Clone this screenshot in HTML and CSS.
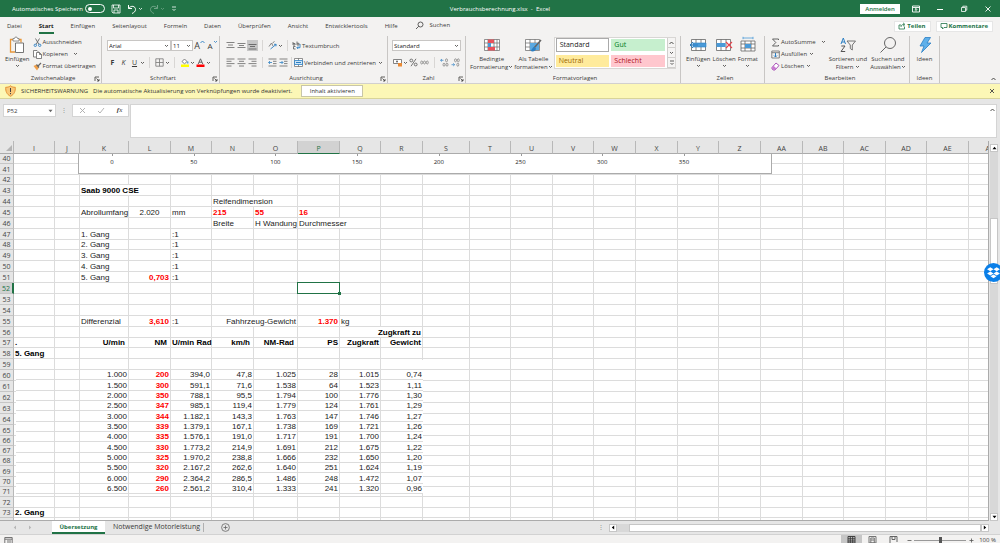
FILE: index.html
```html
<!DOCTYPE html>
<html lang="de">
<head>
<meta charset="utf-8">
<title>Verbrauchsberechnung.xlsx - Excel</title>
<link rel="stylesheet" href="styles.css">
</head>
<body>
<svg class="defs" aria-hidden="true">
  <symbol id="chev" viewBox="0 0 5 4"><path d="M1 1l1.500 1.500L4 1" fill="none" stroke="currentColor" stroke-width=".8"/></symbol>
  <symbol id="chev-up" viewBox="0 0 5 4"><path d="M.5 3l2-2 2 2" fill="none" stroke="currentColor" stroke-width=".9"/></symbol>
  <symbol id="launch" viewBox="0 0 6 6"><path d="M1 5V1h4M2.500 2.500L5 5M5 3v2H3" fill="none" stroke="currentColor" stroke-width=".8"/></symbol>
</svg>

<header class="titlebar">
  <div class="quick">
    <span>Automatisches Speichern</span>
    <button class="toggle" aria-label="Automatisches Speichern"><i></i></button>
    <button aria-label="Speichern"><svg width="10" height="10" viewBox="0 0 10 10" fill="none" stroke="currentColor" stroke-width=".8"><path d="M1 1h8v8H2L1 8zM2.500 1v3h5V1M3 9V6h4v3"/></svg></button>
    <button aria-label="Rückgängig"><svg width="10" height="10" viewBox="0 0 10 10" fill="none" stroke="currentColor"><path d="M1.500 1v3.500H5M1.500 4.500C4 1 8.500 2 8.500 5.500 8.500 7.500 7 8.500 5 9.500"/></svg><svg class="chev"><use href="#chev"/></svg></button>
    <button class="dim" aria-label="Wiederholen"><svg width="10" height="10" viewBox="0 0 10 10" fill="none" stroke="currentColor"><path d="M8.500 1v3.500H5M8.500 4.500C6 1 1.500 2 1.500 5.500 1.500 7.500 3 8.500 5 9.500"/></svg><svg class="chev"><use href="#chev"/></svg></button>
    <button aria-label="Symbolleiste anpassen"><svg width="6" height="6" viewBox="0 0 6 6" fill="none" stroke="currentColor" stroke-width=".8"><path d="M1 1h4M1.500 3L3 4.500 4.500 3"/></svg></button>
  </div>
  <h1>Verbrauchsberechnung.xlsx&nbsp; -&nbsp; Excel</h1>
  <div class="window">
    <button class="signin">Anmelden</button>
    <button aria-label="Menüband-Anzeigeoptionen"><svg width="10" height="8" viewBox="0 0 10 8" fill="none" stroke="currentColor" stroke-width=".9"><path d="M1.500 1h7v6h-7zM1.500 2.500h7M5 6.500V3.500M3.800 4.700L5 3.500l1.200 1.200"/></svg></button>
    <button aria-label="Minimieren"><svg width="10" height="8" viewBox="0 0 10 8" stroke="currentColor"><path d="M2 4.500h6"/></svg></button>
    <button aria-label="Verkleinern"><svg width="10" height="8" viewBox="0 0 10 8" fill="none" stroke="currentColor" stroke-width=".8"><path d="M2.500 2.500h4v4h-4zM3.800 2.500V1.200h4v4H6.500"/></svg></button>
    <button aria-label="Schließen"><svg width="10" height="8" viewBox="0 0 10 8" stroke="currentColor" stroke-width=".9"><path d="M2.500 1.500l5 5M7.500 1.500l-5 5"/></svg></button>
  </div>
</header>

<nav class="tabs">
  <a href="#">Datei</a><a href="#" class="active">Start</a><a href="#">Einfügen</a><a href="#">Seitenlayout</a><a href="#">Formeln</a><a href="#">Daten</a><a href="#">Überprüfen</a><a href="#">Ansicht</a><a href="#">Entwicklertools</a><a href="#">Hilfe</a>
  <a href="#" class="search"><svg width="9" height="9" viewBox="0 0 9 9" fill="none" stroke="currentColor" stroke-width=".8"><circle cx="5.500" cy="3.500" r="2.500"/><path d="M3.700 5.300L1 8"/></svg>Suchen</a>
  <div class="share">
    <button><svg width="8" height="8" viewBox="0 0 8 8" fill="none" stroke="currentColor" stroke-width=".8"><path d="M3 3H1v4h5.500V4.500M3 5c0-2 1-2.500 3-2.500M5 .8l2 1.700-2 1.700"/></svg>Teilen</button>
    <button><svg width="8" height="8" viewBox="0 0 8 8" fill="none" stroke="currentColor" stroke-width=".8"><path d="M1 1.500h6v4H4L2.500 7V5.500H1z"/></svg>Kommentare</button>
  </div>
</nav>

<section class="ribbon">
  <div class="group g-clip">
    <div class="body">
      <button class="big"><svg width="18" height="18" viewBox="0 0 18 18" fill="none"><path d="M5 3.500H2.500v12.500H7" stroke="#e8973a" stroke-width="1.300"/><path d="M10 3.500h3v3" stroke="#e8973a" stroke-width="1.300"/><path d="M5 5V2.500h1.500a1.500 1.500 0 0 1 3 0H11V5z" fill="#fff" stroke="#777" stroke-width=".8"/><path d="M7.500 7h8v9.500h-8z" fill="#fff" stroke="#666" stroke-width=".9"/></svg><span>Einfügen</span><svg class="chev"><use href="#chev"/></svg></button>
      <div class="list">
        <button><svg width="9" height="9" viewBox="0 0 9 9" fill="none"><path d="M2.500.5l3.500 6M6.500.5L3 6.500" stroke="#666" stroke-width=".9"/><circle cx="2.300" cy="7.300" r="1.200" stroke="#2b7fc4" stroke-width=".9"/><circle cx="6.700" cy="7.300" r="1.200" stroke="#2b7fc4" stroke-width=".9"/></svg>Ausschneiden</button>
        <button><svg width="9" height="9" viewBox="0 0 9 9" fill="#fff" stroke="#666" stroke-width=".8"><path d="M3 7H.5V.5H4L5 1.500V3"/><path d="M3.500 2.500h3l2 2v4h-5zM6.500 2.500v2h2"/></svg>Kopieren <svg class="chev"><use href="#chev"/></svg></button>
        <button><svg width="9" height="9" viewBox="0 0 9 9"><path d="M.5 4l3-1.500L6 5.500 4 8.500z" fill="#f0a04b"/><path d="M3.500 2.500L6 5.500M5 4l3-3" stroke="#666" stroke-width="1.200"/></svg>Format übertragen</button>
      </div>
    </div>
    <h2>Zwischenablage<svg class="launch"><use href="#launch"/></svg></h2>
  </div>

  <div class="group g-font">
    <div class="body stack">
      <div class="row">
        <span class="pick font"><select aria-label="Schriftart"><option>Arial</option></select><svg class="chev"><use href="#chev"/></svg></span><span class="pick size"><select aria-label="Schriftgrad"><option>11</option></select><svg class="chev"><use href="#chev"/></svg></span>
        <button class="tool glyph" aria-label="Schriftgrad vergrößern">A<svg class="chev blue"><use href="#chev-up"/></svg></button>
        <button class="tool glyph small" aria-label="Schriftgrad verkleinern">A<svg class="chev blue"><use href="#chev"/></svg></button>
      </div>
      <div class="row">
        <button class="tool"><b>F</b></button><button class="tool"><i>K</i></button><button class="tool"><u>U</u></button><svg class="chev"><use href="#chev"/></svg><hr>
        <button class="tool" aria-label="Rahmen"><svg width="9" height="9" viewBox="0 0 9 9" fill="none" stroke="#777" stroke-width=".8"><path d="M.8.8h7.400v7.400H.8zM4.500.8v7.400M.8 4.500h7.400"/></svg></button><svg class="chev"><use href="#chev"/></svg><hr>
        <button class="tool" aria-label="Füllfarbe"><svg width="10" height="9" viewBox="0 0 10 9"><path d="M2 3.500l2.500-2.500 2.500 2.500-2.500 2.300z" fill="#fff" stroke="#666" stroke-width=".8"/><path d="M7.800 3.500v2" stroke="#2b7fc4"/><path d="M1 6.500h8V9H1z" fill="#ff0"/></svg></button><svg class="chev"><use href="#chev"/></svg>
        <button class="tool" aria-label="Schriftfarbe"><svg width="9" height="9" viewBox="0 0 9 9"><path d="M2.200 6l2.300-5.200L6.800 6M3 4.200h3" fill="none" stroke="#555" stroke-width=".9"/><path d="M.5 6.500h8V9h-8z" fill="#f00"/></svg></button><svg class="chev"><use href="#chev"/></svg>
      </div>
    </div>
    <h2>Schriftart<svg class="launch"><use href="#launch"/></svg></h2>
  </div>

  <div class="group g-align">
    <div class="body stack">
      <div class="row">
        <button class="tool" aria-label="Oben"><svg width="9" height="9" viewBox="0 0 9 9" stroke="#666" stroke-width=".8"><path d="M.5 1.500h8M2 4h5M.5 6.500h8"/></svg></button>
        <button class="tool" aria-label="Mitte"><svg width="9" height="9" viewBox="0 0 9 9" stroke="#666" stroke-width=".8"><path d="M.5 2.500h8M2 4.500h5M.5 6.500h8"/></svg></button>
        <button class="tool on" aria-label="Unten"><svg width="9" height="9" viewBox="0 0 9 9" stroke="#555" stroke-width=".8"><path d="M.5 3.500h8M2 5.500h5M.5 8h8"/></svg></button><hr>
        <button class="tool" aria-label="Ausrichtung"><svg width="9" height="9" viewBox="0 0 9 9" fill="none"><path d="M1 5.500l2.500-3.500 1.500 3M4.500 2l2-1.500" stroke="#777" stroke-width=".9"/><path d="M2.500 8L8 3.500M6 3.300l2.200 0-.3 2" stroke="#2b7fc4" stroke-width=".9"/></svg></button><svg class="chev"><use href="#chev"/></svg><hr>
        <button class="text"><svg width="9" height="9" viewBox="0 0 9 9" fill="none" stroke-width=".9"><path d="M1 1v3h2V2.500H1M5 .5V4h2V2.300H5M3.500 5.500H1.500v2.500h2" stroke="#666"/><path d="M8 3v3.700H5M6.200 5.400L4.900 6.700l1.300 1.300" stroke="#2b7fc4"/></svg>Textumbruch</button>
      </div>
      <div class="row">
        <button class="tool" aria-label="Linksbündig"><svg width="9" height="9" viewBox="0 0 9 9" stroke="#666" stroke-width=".8"><path d="M.5 1h8M.5 3.300h5M.5 5.600h8M.5 8h5"/></svg></button>
        <button class="tool" aria-label="Zentriert"><svg width="9" height="9" viewBox="0 0 9 9" stroke="#666" stroke-width=".8"><path d="M.5 1h8M2 3.300h5M.5 5.600h8M2 8h5"/></svg></button>
        <button class="tool" aria-label="Rechtsbündig"><svg width="9" height="9" viewBox="0 0 9 9" stroke="#666" stroke-width=".8"><path d="M.5 1h8M3.500 3.300h5M.5 5.600h8M3.500 8h5"/></svg></button><hr>
        <button class="tool" aria-label="Einzug verkleinern"><svg width="9" height="9" viewBox="0 0 9 9" fill="none" stroke="#666" stroke-width=".8"><path d="M.5 1h8M5 3.300h3.500M5 5.600h3.500M.5 8h8"/><path d="M4 4.500H.7M2 3L.6 4.500 2 6" stroke="#2b7fc4"/></svg></button>
        <button class="tool" aria-label="Einzug vergrößern"><svg width="9" height="9" viewBox="0 0 9 9" fill="none" stroke="#666" stroke-width=".8"><path d="M.5 1h8M5 3.300h3.500M5 5.600h3.500M.5 8h8"/><path d="M.5 4.500h3.400M2.500 3L4 4.500 2.500 6" stroke="#2b7fc4"/></svg></button><hr class="tight">
        <button class="text"><svg width="9" height="9" viewBox="0 0 9 9"><path d="M.5.5h8v8h-8zM4.500.5v8" fill="#fff" stroke="#666" stroke-width=".7"/><path d="M.5 2.500h8v4h-8z" fill="#cfe6f7" stroke="#2b7fc4" stroke-width=".8"/><path d="M2 4.500h5" stroke="#2b7fc4"/></svg>Verbinden und zentrieren <svg class="chev"><use href="#chev"/></svg></button>
      </div>
    </div>
    <h2>Ausrichtung<svg class="launch"><use href="#launch"/></svg></h2>
  </div>

  <div class="group g-num">
    <div class="body stack">
      <div class="row"><span class="pick"><select aria-label="Zahlenformat"><option>Standard</option></select><svg class="chev"><use href="#chev"/></svg></span></div>
      <div class="row">
        <button class="tool" aria-label="Währung"><svg width="10" height="9" viewBox="0 0 10 9"><path d="M.5 1.500h8v4h-8z" fill="#fff" stroke="#666" stroke-width=".8"/><circle cx="4" cy="3.500" r="1" fill="#666"/><path d="M5 5h4v3.500H5z" fill="#e98a35"/></svg></button><svg class="chev"><use href="#chev"/></svg>
        <button class="tool" aria-label="Prozent"><svg width="9" height="9" viewBox="0 0 9 9" fill="none" stroke="#555" stroke-width=".8"><circle cx="2.300" cy="2.500" r="1.400"/><circle cx="6.700" cy="6.500" r="1.400"/><path d="M7 .8L2 8.200"/></svg></button>
        <button class="tool" aria-label="Tausendertrennzeichen"><svg width="9" height="9" viewBox="0 0 9 9" fill="none" stroke="#777" stroke-width=".7"><ellipse cx="1.700" cy="4.500" rx="1" ry="1.500"/><ellipse cx="4.500" cy="4.500" rx="1" ry="1.500"/><ellipse cx="7.300" cy="4.500" rx="1" ry="1.500"/></svg></button><hr>
        <button class="tool" aria-label="Dezimalstelle hinzufügen"><svg width="9" height="9" viewBox="0 0 9 9" fill="none" stroke="#777" stroke-width=".7"><path d="M3.500 2.300H.6M2 1L.6 2.300 2 3.600" stroke="#2b7fc4"/><ellipse cx="6.500" cy="2.300" rx="1" ry="1.500"/><ellipse cx="4" cy="6.700" rx="1" ry="1.500"/><ellipse cx="7" cy="6.700" rx="1" ry="1.500"/></svg></button>
        <button class="tool" aria-label="Dezimalstelle löschen"><svg width="9" height="9" viewBox="0 0 9 9" fill="none" stroke="#777" stroke-width=".7"><path d="M.5 6.700h3M2.200 5.300l1.400 1.400L2.200 8" stroke="#2b7fc4"/><ellipse cx="4.500" cy="2.300" rx="1" ry="1.500"/><ellipse cx="7.300" cy="2.300" rx="1" ry="1.500"/><ellipse cx="6.800" cy="6.700" rx="1" ry="1.500"/></svg></button>
      </div>
    </div>
    <h2>Zahl<svg class="launch"><use href="#launch"/></svg></h2>
  </div>

  <div class="group g-styles">
    <div class="body">
      <button class="big"><svg width="18" height="18" viewBox="0 0 18 18"><path d="M1.500 3.500h15v11h-15zM1.500 7h15M1.500 11h15M5 3.500v11M11 3.500v11M14 3.500v11" fill="#fff" stroke="#666" stroke-width=".7"/><path d="M5 3.500h6V7H5zM5 11h7v3.500H5z" fill="#e8515a"/><path d="M5 7h3v4H5z" fill="#4a9ad8"/></svg><span>Bedingte<br>Formatierung<svg class="chev"><use href="#chev"/></svg></span></button>
      <button class="big"><svg width="18" height="18" viewBox="0 0 18 18"><path d="M1.500 3.500h14v11h-14zM1.500 7h14M1.500 11h14M6 3.500v11M11 3.500v11" fill="#fff" stroke="#666" stroke-width=".7"/><path d="M6 7h9v7H6z" fill="#5aa8e0"/><path d="M17 4l-7 8" stroke="#666" stroke-width="1.500"/><path d="M10.500 11c-2 0-2 2-4 4 3 1 5 0 5.500-2.500z" fill="#2b7fc4"/></svg><span>Als Tabelle<br>formatieren<svg class="chev"><use href="#chev"/></svg></span></button>
      <div class="gallery">
        <button class="st-std">Standard</button><button class="st-gut">Gut</button>
        <button class="st-neu">Neutral</button><button class="st-bad">Schlecht</button>
        <div class="pager"><button aria-label="Nach oben"><svg class="chev"><use href="#chev-up"/></svg></button><button aria-label="Nach unten"><svg class="chev"><use href="#chev"/></svg></button><button aria-label="Mehr"><svg width="6" height="6" viewBox="0 0 6 6" fill="none" stroke="currentColor" stroke-width=".8"><path d="M1 1h4M1.500 3L3 4.500 4.500 3"/></svg></button></div>
      </div>
    </div>
    <h2>Formatvorlagen</h2>
  </div>

  <div class="group g-cells">
    <div class="body">
      <button class="big"><svg width="18" height="18" viewBox="0 0 18 18"><path d="M2.500 3.500h14v11h-14zM7 3.500v11M12 3.500v11" fill="#fff" stroke="#666" stroke-width=".8"/><path d="M4 7h13v4H4z" fill="#4a9ad8" stroke="#2b7fc4" stroke-width=".6"/><path d="M9 9H1M4 6L1 9l3 3" fill="none" stroke="#2b7fc4"/></svg><span>Einfügen</span><svg class="chev"><use href="#chev"/></svg></button>
      <button class="big"><svg width="18" height="18" viewBox="0 0 18 18"><path d="M1.500 3.500h14v11h-14zM6 3.500v11M11 3.500v11" fill="#fff" stroke="#666" stroke-width=".8"/><path d="M1.500 7h9v4h-9z" fill="#4a9ad8"/><path d="M11 6l6 6M17 6l-6 6" stroke="#e8414b" stroke-width="1.100"/></svg><span>Löschen</span><svg class="chev"><use href="#chev"/></svg></button>
      <button class="big"><svg width="18" height="18" viewBox="0 0 18 18"><path d="M2 5h14v10H2zM2 8h14M2 12h14M6 5v10M12 5v10" fill="#fff" stroke="#666" stroke-width=".8"/><path d="M6 8h6v4H6z" fill="#4a9ad8"/><path d="M4 2h10M4 .8v2.400M14 .8v2.400" stroke="#4a9ad8" stroke-width=".8"/></svg><span>Format</span><svg class="chev"><use href="#chev"/></svg></button>
    </div>
    <h2>Zellen</h2>
  </div>

  <div class="group g-edit">
    <div class="body">
      <div class="list">
        <button><svg width="9" height="9" viewBox="0 0 9 9" fill="none" stroke="#555" stroke-width=".9"><path d="M7.500 2V1h-6l3.300 3.500L1.500 8h6V7"/></svg>AutoSumme <svg class="chev far"><use href="#chev"/></svg></button>
        <button><svg width="9" height="9" viewBox="0 0 9 9" fill="none"><path d="M.8 1h7.500v7H.8zM.8 2.700h7.500" stroke="#666" stroke-width=".8"/><path d="M4.500 3v4M3 5.500L4.500 7 6 5.500" stroke="#2b7fc4"/></svg>Ausfüllen <svg class="chev"><use href="#chev"/></svg></button>
        <button><svg width="9" height="9" viewBox="0 0 9 9"><path d="M1 5.500L5 1l3 2.500L4 8H2.500L1 7z" fill="#fff" stroke="#a040b0" stroke-width=".9"/><path d="M1 5.500l1.500-1.700L5.500 6.500 4 8H2.500L1 7z" fill="#c77bd0"/></svg>Löschen <svg class="chev"><use href="#chev"/></svg></button>
      </div>
      <button class="big"><svg width="18" height="18" viewBox="0 0 18 18" fill="none"><path d="M2 8l2.300-6L6.500 8M2.800 6h3" stroke="#2b7fc4"/><path d="M2.300 10H6l-4 5.500h4.200" stroke="#555"/><path d="M8 5h8.500l-3.200 4v5l-2-1.500V9z" stroke="#666" stroke-width=".9"/></svg><span>Sortieren und<br>Filtern <svg class="chev"><use href="#chev"/></svg></span></button>
      <button class="big"><svg width="18" height="18" viewBox="0 0 18 18" fill="none" stroke="#666"><circle cx="11" cy="7" r="5.500"/><path d="M7 11l-5.500 5.500"/></svg><span>Suchen und<br>Auswählen<svg class="chev"><use href="#chev"/></svg></span></button>
    </div>
    <h2>Bearbeiten</h2>
  </div>

  <div class="group g-idea">
    <div class="body"><button class="big"><svg width="18" height="18" viewBox="0 0 18 18"><path d="M9 1.500h5.500L11 7h4L5.500 16.500 8 10H4z" fill="#5fb0ea" stroke="#2b7fc4" stroke-width=".8"/></svg><span>Ideen</span></button></div>
    <h2>Ideen</h2>
  </div>
  <button class="collapse" aria-label="Menüband reduzieren"><svg class="chev"><use href="#chev-up"/></svg></button>
</section>

<div class="warning" role="alert">
  <svg width="11" height="12" viewBox="0 0 11 12"><path d="M5.500.8C7 2 8.500 2.300 10.300 2.300c.2 4-1 7-4.800 9-3.800-2-5-5-4.800-9C2.500 2.300 4 2 5.500.8z" fill="#f9c978" stroke="#e08a2c" stroke-width=".9"/><path d="M5.500 3v4M5.500 8v1.200" stroke="#444"/></svg>
  <strong>SICHERHEITSWARNUNG</strong>
  <span>Die automatische Aktualisierung von Verknüpfungen wurde deaktiviert.</span>
  <button class="enable">Inhalt aktivieren</button>
  <button class="dismiss" aria-label="Schließen"><svg width="6" height="6" viewBox="0 0 6 6" stroke="#444" stroke-width=".9"><path d="M1 1l4 4M5 1L1 5"/></svg></button>
</div>

<div class="formula">
  <div class="namebox"><input aria-label="Namenfeld" value="P52"><svg width="5" height="4" viewBox="0 0 5 4"><path d="M.5.8h4L2.500 3.300z" fill="#666"/></svg></div>
  <span class="dots">⋮</span>
  <div class="fx">
    <button aria-label="Abbrechen"><svg width="7" height="7" viewBox="0 0 7 7" stroke="#aaa" stroke-width=".9"><path d="M1 1l5 5M6 1L1 6"/></svg></button>
    <button aria-label="Eingeben"><svg width="8" height="7" viewBox="0 0 8 7" fill="none" stroke="#aaa" stroke-width=".9"><path d="M1 4l2 2 4-5"/></svg></button>
    <button class="fn"><i>f</i>x</button>
  </div>
  <div class="entry"><textarea aria-label="Bearbeitungsleiste"></textarea><svg class="chev"><use href="#chev-up"/></svg></div>
</div>

<main class="workbook">
  <div class="sheet">
    <table class="cells" id="cells"></table>
    <div class="chart"><span>0</span><span>50</span><span>100</span><span>150</span><span>200</span><span>250</span><span>300</span><span>350</span></div>
    <table class="cells pasted" id="pasted"></table>
  </div>
  <div class="vscroll"><button aria-label="Nach oben"><svg width="5" height="4" viewBox="0 0 5 4"><path d="M2.500.8l2 2.400h-4z"/></svg></button><div class="track"><div class="thumb"></div></div><button aria-label="Nach unten"><svg width="5" height="4" viewBox="0 0 5 4"><path d="M2.500 3.200l2-2.400h-4z"/></svg></button></div>
  <button class="dropbox" aria-label="Dropbox"><svg width="19" height="19" viewBox="0 0 19 19"><circle cx="9.500" cy="9.500" r="9.500" fill="#0a7fe8"/><path d="M6.300 4.200L9.500 6.200 6.300 8.200 3.100 6.200zM12.700 4.200l3.200 2-3.200 2-3.200-2zM6.300 8.500l3.200 2-3.200 2-3.200-2zM12.700 8.500l3.200 2-3.200 2-3.200-2zM9.500 11.400l3 1.900-3 1.900-3-1.900z" fill="#fff"/></svg></button>
</main>

<footer>
  <div class="sheets">
    <div class="nav"><button aria-label="Zurück"><svg width="4" height="5" viewBox="0 0 4 5"><path d="M3 .5v4L.8 2.500z" fill="#b5b5b5"/></svg></button><button aria-label="Weiter"><svg width="4" height="5" viewBox="0 0 4 5"><path d="M1 .5v4l2.200-2z" fill="#b5b5b5"/></svg></button></div>
    <a href="#" class="active">Übersetzung</a><a href="#" class="other">Notwendige Motorleistung</a>
    <button class="add" aria-label="Neues Blatt"><svg width="9" height="9" viewBox="0 0 9 9" fill="none" stroke="#666" stroke-width=".8"><circle cx="4.500" cy="4.500" r="3.900"/><path d="M4.500 2.500v4M2.500 4.500h4"/></svg></button>
    <span class="dots">⋮</span>
    <div class="hscroll"><button aria-label="Nach links"><svg width="4" height="5" viewBox="0 0 4 5"><path d="M.8 2.500l2.400-2v4z"/></svg></button><div class="track"><div class="thumb"></div></div><button aria-label="Nach rechts"><svg width="4" height="5" viewBox="0 0 4 5"><path d="M3.200 2.500L.8.500v4z"/></svg></button></div>
  </div>
  <div class="status">
    <svg class="macro" width="9" height="8" viewBox="0 0 9 8" fill="none" stroke="#666" stroke-width=".9"><path d="M.8 1.500h7.400V8H.8zM.8 3.200h7.400M3 5h4M3 7h4"/></svg>
    <button class="view on" aria-label="Normal"><svg width="9" height="8" viewBox="0 0 9 8" fill="none" stroke="#333" stroke-width=".9"><path d="M1 1.500h7V8H1zM1 3.800h7M1 6h7M3.300 1.500V8M5.700 1.500V8"/></svg></button>
    <button class="view" aria-label="Seitenlayout"><svg width="9" height="8" viewBox="0 0 9 8" fill="none" stroke="#666" stroke-width=".9"><path d="M1 1.500h7V8H1zM2.800 3h3.500v5H2.800zM3 5h3"/></svg></button>
    <button class="view" aria-label="Umbruchvorschau"><svg width="9" height="8" viewBox="0 0 9 8" fill="none" stroke="#555" stroke-width=".9"><path d="M1 8V1.500h7V7M3 1.500v3h3v-3"/></svg></button>
    <button class="zoomer" aria-label="Verkleinern"><svg width="5" height="5" viewBox="0 0 5 5" stroke="#555" stroke-width=".8"><path d="M.5 2.500h4"/></svg></button>
    <input type="range" min="10" max="400" value="205" aria-label="Zoom">
    <button class="zoomer" aria-label="Vergrößern"><svg width="5" height="5" viewBox="0 0 5 5" stroke="#555" stroke-width=".8"><path d="M.5 2.500h4M2.500.5v4"/></svg></button>
    <span>100 %</span>
  </div>
</footer>
<script src="sheet.js"></script>
</body>
</html>
```
FILE: styles.css
```css
* { box-sizing: border-box; }
body {
  margin: 0;
  height: 100vh;
  display: flex;
  flex-direction: column;
  overflow: hidden;
  background: #e6e6e6;
  color: #3b3a39;
  font: 6px/8px "Open Sans", "Noto Sans", sans-serif;
}
button, input, select, textarea { font: inherit; color: inherit; border: 0; background: none; padding: 0; margin: 0; border-radius: 0; }
button { display: flex; align-items: center; justify-content: center; white-space: nowrap; }
a { color: inherit; text-decoration: none; }
h1, h2 { margin: 0; font: inherit; }
svg { flex: none; display: block; }
.defs { position: absolute; width: 0; height: 0; }
.chev { width: 5px; height: 4px; }
span .chev { display: inline-block; }

/* Title bar */
.titlebar { flex: none; height: 17px; display: grid; grid-template-columns: 1fr auto 1fr; align-items: center; background: #217346; color: #fff; }
.quick { display: flex; align-items: center; gap: 6px; padding-left: 12px; }
.quick span { margin-right: -4px; }
.quick button { gap: 1px; }
.toggle { width: 20px; height: 9px; border: 1px solid #fff; border-radius: 5px; }
.quick .toggle { justify-content: flex-start; padding-left: 2px; }
.toggle i { width: 4px; height: 4px; border-radius: 50%; background: #fff; }
.dim { opacity: .35; }
.window { display: flex; justify-content: flex-end; align-items: center; gap: 14px; padding-right: 7px; }
.signin { width: 40px; height: 10px; background: #fff; color: #217346; font-weight: 600; margin-right: -3px; }

/* Tabs */
.tabs { flex: none; height: 18px; display: flex; align-items: center; gap: 17px; padding: 0 7px; background: #f3f2f1; }
.tabs a { height: 15px; line-height: 14px; border-bottom: 2px solid transparent; }
.tabs a.active { border-color: #217346; color: #222; font-weight: 700; }
.tabs .search { display: flex; gap: 6px; align-items: center; }
.share { margin-left: auto; display: flex; gap: 5px; color: #217346; font-weight: 700; }
.share button { height: 11px; padding: 0 4px 0 3px; gap: 1px; background: #fff; border: 1px solid #e6e6e6; }

/* Ribbon */
.ribbon { flex: none; height: 49px; display: flex; background: #f3f2f1; border-bottom: 1px solid #d2d0ce; padding-top: 1px; }
.group { display: flex; flex-direction: column; border-right: 1px solid #c8c6c4; }
.group .body { flex: 1; display: flex; gap: 4px; }
.group h2 { position: relative; text-align: center; line-height: 9px; }
.launch { position: absolute; right: 1px; bottom: 1px; width: 6px; height: 6px; }
.big { flex-direction: column; justify-content: flex-start; line-height: 8px; }
.big > svg:first-child { margin-bottom: 1px; }
.big > .chev { margin-top: 1px; }
.list { display: flex; flex-direction: column; height: 36px; }
.list button { justify-content: flex-start; gap: 1px; height: 12px; }
.list .chev { margin-left: 4px; }
.stack { flex-direction: column; }
.group .stack { gap: 6px; padding-top: 4px; }
.row { display: flex; align-items: center; height: 11px; }
.row hr { width: 1px; height: 11px; margin: 0 4px; border: 0; background: #d8d6d4; }
.row .tight { margin: 0 2px; }
.tool { width: 11px; height: 11px; font-size: 7px; }
.on { background: #c6c6c6; }
.glyph { font-size: 9px; align-items: flex-start; width: 13px; line-height: 11px; }
.glyph.small { font-size: 8px; }
.blue { color: #2b7fc4; }
.text { gap: 1px; }
.text .chev { margin-left: 1px; }
.pick { position: relative; flex: 1; height: 11px; }
.pick select { appearance: none; width: 100%; height: 11px; padding: 0 0 0 1px; background: #fff; border: 1px solid #c8c6c4; color: #222; }
.pick .chev { position: absolute; right: 2px; top: 4px; }
.pick.font { flex: 0 0 64px; }
.pick.size { flex: 0 0 22px; }

.g-clip { width: 102px; padding-left: 5px; }
.g-font { width: 118px; padding-left: 5px; }
.g-align { width: 168px; padding-left: 5px; }
.g-num { width: 78px; padding-left: 4px; }
.g-num .row:first-child { padding-right: 4px; }
.g-styles { width: 215px; padding-left: 4px; }
.g-cells { width: 84px; padding-left: 5px; }
.g-edit { width: 145px; padding-left: 6px; }
.g-edit .body { gap: 3px; }
.g-edit .list .chev { margin-left: 1px; }
.g-edit .list .far { margin-left: 4px; }
.g-idea { width: 30px; }
.g-idea .body { justify-content: center; }
.g-clip .body { gap: 3px; }
.g-cells .body { gap: 2px; }
.g-styles .body { gap: 1px; }

.gallery { flex: 1; height: 32px; margin: 1px 4px 0 0; display: grid; grid-template-columns: 1fr 1fr 8px; grid-template-rows: 1fr 1fr; gap: 2px; padding-left: 1px; background: #fff; border: 1px solid #d8d6d4; font-size: 7px; }
.gallery > button { justify-content: flex-start; padding-left: 3px; margin: 1px 0; }
.gallery .st-std { border: 1px solid #aaa; color: #222; margin: 0; }
.st-gut { background: #c6efce; color: #007a1c; }
.st-neu { background: #ffeb9c; color: #9c6500; }
.st-bad { background: #ffc7ce; color: #b0101c; }
.pager { grid-column: 3; grid-row: 1 / 3; display: flex; flex-direction: column; }
.pager button { flex: 1; border: 1px solid #d0cecc; border-width: 0 0 1px 1px; background: #f5f4f3; }
.collapse { margin: auto 4px 2px auto; }

/* Message bar */
.warning { flex: none; height: 15px; display: flex; align-items: center; gap: 5px; padding: 0 5px; background: #fcf7b6; border-bottom: 1px solid #d8d49a; color: #333; }
.warning strong { font-weight: 400; }
.enable { width: 62px; height: 12px; margin-left: 4px; background: #fff; border: 1px solid #c8c6a8; }
.dismiss { margin-left: auto; }

/* Formula bar */
.formula { flex: none; height: 42px; display: flex; align-items: flex-start; padding: 5px 3px 3px; }
.namebox, .fx { display: flex; align-items: center; height: 13px; background: #fff; border: 1px solid #d4d4d4; }
.namebox { width: 53px; padding: 0 2px 0 3px; }
.namebox input { flex: 1; width: 20px; height: 11px; }
.dots { width: 16px; text-align: center; line-height: 13px; color: #888; }
.fx { width: 57px; justify-content: space-around; }
.fn { font: italic 7px/9px "Liberation Serif", serif; }
.fn i { font-weight: 700; }
.entry { flex: 1; height: 34px; margin-left: 1px; display: flex; background: #fff; border: 1px solid #d4d4d4; padding-right: 1px; }
.entry textarea { flex: 1; resize: none; outline: 0; }
.entry .chev { margin-top: 3px; }

/* Worksheet */
.workbook { flex: 1; min-height: 0; display: flex; position: relative; }
.sheet { flex: 1; min-width: 0; position: relative; overflow: hidden; background: #fff; border-right: 1px solid #ababab; border-bottom: 1px solid #ababab; }
/* The columns set the table's width; it runs on under the right edge. */
.cells { width: 1px; table-layout: fixed; border-collapse: separate; border-spacing: 0; font: 8px/9px "Liberation Sans", Arial, sans-serif; color: #222; }
.cells tr { height: 11px; }
.cells tr.short { height: 10px; }
.cells td { padding: 1px 1px 0; border-right: 1px solid #dcdcdc; border-bottom: 1px solid #dcdcdc; white-space: nowrap; overflow: visible; vertical-align: middle; }
.cells .short td { padding-top: 0; }
.cells th { padding: 0; background: #e6e6e6; color: #444; font: 7px/9px "Open Sans", "Noto Sans", sans-serif; border-bottom: 1px solid #c6c6c6; border-right: 1px solid #b8b8b8; overflow: hidden; white-space: nowrap; }
.cells thead tr { height: 13px; }
.cells thead th { padding-top: 2px; border-bottom-color: #ababab; }
.cells thead th.sel { background: #d2d2d2; color: #217346; border-bottom: 1px solid #217346; }
.cells tbody th.sel { background: #d2d2d2; color: #217346; border-right: 2px solid #217346; }
.corner svg { margin-left: auto; }
.cells .r { text-align: right; }
.cells .c { text-align: center; }
.cells .h { text-align: right; padding-right: 3px; }
.cells .b { font-weight: 700; color: #000; }
.cells .red { font-weight: 700; color: #f00; }
.cells .t { padding-right: 0; }
.cells td.cursor { position: relative; }
.cursor::before { content: ""; position: absolute; inset: -1px -1px -1px -1px; border: 1px solid #217346; }
.cursor::after { content: ""; position: absolute; right: -2px; bottom: -2px; width: 3px; height: 3px; background: #217346; }
.chart { position: absolute; left: 78px; top: 13px; width: 694px; height: 20px; padding: 4px 79px 0 25px; display: flex; justify-content: space-between; background: #fff; border: 1px solid #ababab; border-top: 0; }
.chart span { position: relative; width: 16px; text-align: center; line-height: 9px; color: #222; }
.chart span::before { content: ""; position: absolute; left: 8px; top: -4px; width: 1px; height: 2px; background: #999; }
.pasted { position: absolute; left: 16px; top: 219px; background: #fff; }
.cells.pasted td:last-child { border-right: 0; }

.vscroll { width: 11px; padding: 3px 1px 0; display: flex; flex-direction: column; }
.vscroll button, .hscroll button { width: 8px; height: 8px; background: #fff; border: 1px solid #c6c6c6; }
.vscroll .track { flex: 1; background: #d8d8d8; padding-top: 66px; width: 8px; }
.vscroll .thumb { height: 66px; background: #fff; border: 1px solid #c6c6c6; }
.dropbox { position: absolute; right: -3px; top: 122px; }

/* Sheet tabs and status bar */
footer { flex: none; }
.sheets { height: 14px; display: flex; align-items: center; border-bottom: 1px solid #d2d2d2; }
.nav { width: 52px; display: flex; gap: 11px; padding-left: 13px; }
.sheets a { line-height: 12px; height: 13px; }
.sheets a.active { width: 53px; text-align: center; background: #fff; color: #217346; font-weight: 700; border-bottom: 2px solid #217346; align-self: flex-start; }
.sheets a.other { padding: 0 3px 0 8px; font-size: 7px; }
.add { padding-left: 17px; height: 9px; }
.sheets .add { border-left: 1px solid #b0b0b0; }
.sheets .dots { margin-left: auto; }
.hscroll { width: 380px; display: flex; margin-right: 11px; }
.hscroll .track { flex: 1; padding-left: 12px; background: #d8d8d8; }
.hscroll .thumb { height: 8px; background: #fff; border: 1px solid #c6c6c6; }
.status { height: 8px; display: flex; align-items: flex-start; overflow: hidden; padding: 0 4px; background: #f3f2f1; }
.macro { margin: 1px auto 0 0; }
.view { width: 21px; height: 8px; }
.zoomer { width: 10px; height: 10px; }
.status input { appearance: none; width: 52px; height: 10px; background: linear-gradient(#999, #999) center / 100% 1px no-repeat; }
.status input::-webkit-slider-thumb { appearance: none; width: 3px; height: 7px; background: #555; }
.status span { line-height: 10px; margin-left: 3px; }
```
FILE: sheet.js
```js
const widths = [14, 41, 25, 49, 42, 41, 42, 44, 42, 41, 42, 47, 41, 42, 41, 42, 42, 41, 42, 42, 41, 42, 41, 42, 42];
const letters = ["I", "J", "K", "L", "M", "N", "O", "P", "Q", "R", "S", "T", "U", "V", "W", "X", "Y", "Z", "AA", "AB", "AC", "AD", "AE", "AF"];

// Cell: [text, classes, column span]
const content = {
  K43: ["Saab 9000 CSE", "b", 2],
  N44: ["Reifendimension", "t", 2],
  K45: ["Abrollumfang", "t"], L45: ["2.020", "c"], M45: ["mm", "t"],
  N45: ["215", "red t"], O45: ["55", "red t"], P45: ["16", "red"],
  N46: ["Breite", "t"], O46: ["H Wandung", "t"], P46: ["Durchmesser", "t", 2],
  K47: ["1. Gang"], M47: [":1"], K48: ["2. Gang"], M48: [":1"],
  K49: ["3. Gang"], M49: [":1"], K50: ["4. Gang"], M50: [":1"],
  K51: ["5. Gang"], L51: ["0,703", "red r"], M51: [":1"],
  P52: ["", "cursor"],
  K55: ["Differenzial"], L55: ["3,610", "red r"], M55: [":1"],
  N55: ["Fahhrzeug-Gewicht", "r", 2], P55: ["1.370", "red r"], Q55: ["kg", "t"],
  Q56: ["Zugkraft zu", "b r", 2],
  I57: [".", "b"], K57: ["U/min", "b h"], L57: ["NM", "b h"], M57: ["U/min Rad", "b t"], N57: ["km/h", "b h"],
  O57: ["NM-Rad", "b h"], P57: ["PS", "b r"], Q57: ["Zugkraft", "b r"], R57: ["Gewicht", "b r"],
  I58: ["5. Gang", "b t"],
  I73: ["2. Gang", "b t"]
};
const shortRows = new Set([40, 42, 48, 57, 66, 67, 68, 70, 71, 73]);

const measurements = [
  ["1.000", "200", "394,0", "47,8", "1.025", "28", "1.015", "0,74"],
  ["1.500", "300", "591,1", "71,6", "1.538", "64", "1.523", "1,11"],
  ["2.000", "350", "788,1", "95,5", "1.794", "100", "1.776", "1,30"],
  ["2.500", "347", "985,1", "119,4", "1.779", "124", "1.761", "1,29"],
  ["3.000", "344", "1.182,1", "143,3", "1.763", "147", "1.746", "1,27"],
  ["3.500", "339", "1.379,1", "167,1", "1.738", "169", "1.721", "1,26"],
  ["4.000", "335", "1.576,1", "191,0", "1.717", "191", "1.700", "1,24"],
  ["4.500", "330", "1.773,2", "214,9", "1.691", "212", "1.675", "1,22"],
  ["5.000", "325", "1.970,2", "238,8", "1.666", "232", "1.650", "1,20"],
  ["5.500", "320", "2.167,2", "262,6", "1.640", "251", "1.624", "1,19"],
  ["6.000", "290", "2.364,2", "286,5", "1.486", "248", "1.472", "1,07"],
  ["6.500", "260", "2.561,2", "310,4", "1.333", "241", "1.320", "0,96"]
];

const cols = list => "<colgroup>" + list.map(w => `<col style="width:${w}px">`).join("") + "</colgroup>";

let html = cols(widths) + '<thead><tr><th class="corner"><svg width="8" height="8" viewBox="0 0 8 8"><path d="M7 1v6H1z" fill="#b4b4b4"/></svg></th>';
html += letters.map(l => `<th${l === "P" ? ' class="sel"' : ""}>${l}</th>`).join("") + "</tr></thead><tbody>";
for (let row = 40; row <= 74; row++) {
  html += `<tr${shortRows.has(row) ? ' class="short"' : ""}><th${row === 52 ? ' class="sel"' : ""}>${row}</th>`;
  for (let i = 0; i < letters.length; i++) {
    const [text = "", cls = "", span = 1] = content[letters[i] + row] || [];
    html += `<td class="${cls}" colspan="${span}">${text}</td>`;
    i += span - 1;
  }
  html += "</tr>";
}
document.getElementById("cells").innerHTML = html + "</tbody>";

let inner = cols([39, 25, 49, 42, 41, 42, 44, 42, 41, 42]) + '<tbody><tr class="short">' + "<td></td>".repeat(10) + "</tr>";
measurements.forEach((values, n) => {
  inner += `<tr${n % 3 === 1 ? "" : ' class="short"'}><td></td><td></td>`;
  inner += values.map((v, i) => `<td class="${i === 1 ? "red r" : "r"}">${v}</td>`).join("") + "</tr>";
});
document.getElementById("pasted").innerHTML = inner + "</tbody>";
```
